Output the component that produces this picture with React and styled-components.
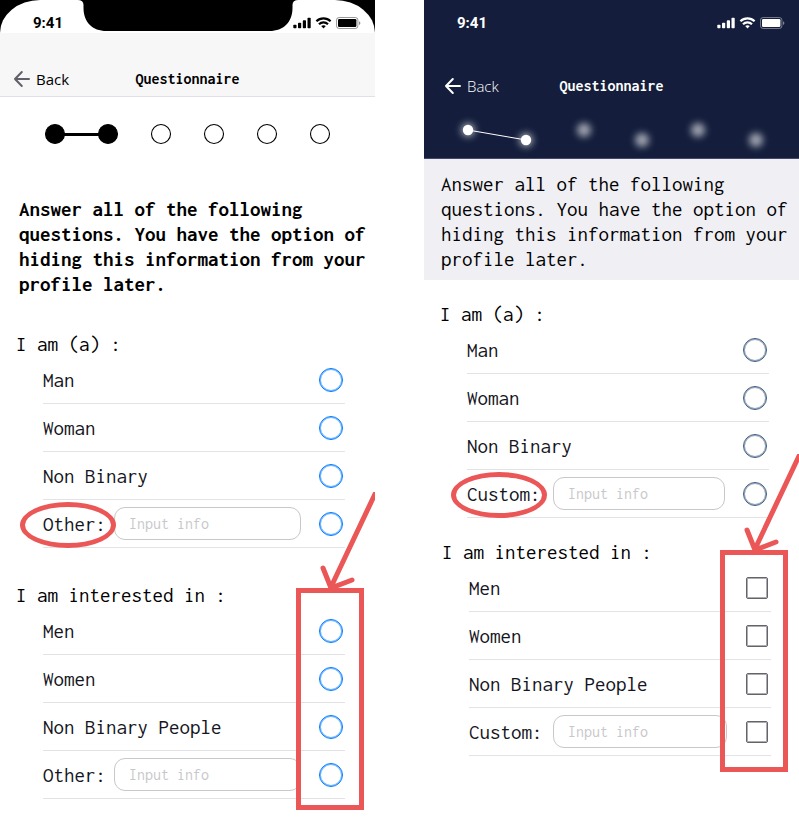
import React from "react";
import styled, { createGlobalStyle } from "styled-components";

const mono = 'Inconsolata, "Liberation Mono", monospace';

const GlobalStyle = createGlobalStyle`
  * { box-sizing: border-box; }
  body { margin: 0; background: #fff; color: #000; font-family: ${mono}; }
`;

const Board = styled.main`
  display: grid;
  grid-template-columns: 1fr 1fr;
  column-gap: 49px;
  align-items: start;
  min-height: 100vh;
  overflow: hidden;
`;

const Phone = styled.section`
  min-width: 0;
`;

const Header = styled.header`
  background: ${(p) => (p.$dark ? "#141e3c" : "#f7f7f7")};
  color: ${(p) => (p.$dark ? "#fff" : "#000")};
  border-bottom: 1px solid ${(p) => (p.$dark ? "#43496b" : "#e0e0e6")};
`;

const Bezel = styled.div`
  position: relative;
  background: ${(p) => (p.$dark ? "transparent" : "#000")};
`;

const StatusBar = styled.div`
  display: flex;
  align-items: center;
  justify-content: space-between;
  height: 33px;
  padding: 12px 14px 0 33px;
  background: ${(p) => (p.$dark ? "transparent" : "#fff")};
  border-radius: ${(p) => (p.$dark ? "0" : "40px 40px 0 0 / 33px 33px 0 0")};
`;

const Notch = styled.svg`
  position: absolute;
  top: 0;
  left: 50%;
  transform: translateX(-50%);
`;

const Time = styled.time`
  font: 700 15px/18px Roboto, sans-serif;
`;

const NavBar = styled.nav`
  display: grid;
  grid-template-columns: 1fr auto 1fr;
  align-items: center;
  padding: ${(p) => (p.$dark ? "39px 20px 11px" : "32px 13px 3px")};
`;

const BackButton = styled.button`
  display: flex;
  align-items: center;
  gap: 5px;
  justify-self: start;
  height: 28px;
  padding: 0;
  border: 0;
  background: none;
  color: inherit;
  font: ${(p) => (p.$dark ? 300 : 400)} 15px/20px "Open Sans", sans-serif;

  svg { color: ${(p) => (p.$dark ? "#fff" : "#626068")}; }
`;

const Title = styled.h1`
  margin: 0;
  font: 700 16px/20px ${mono};
`;

const StepTrack = styled.div`
  display: flex;
  justify-content: center;
  padding: ${(p) => (p.$dark ? "0" : "26px 0 50px")};
`;

const Prompt = styled.p`
  margin: 0;
  padding: ${(p) => (p.$dark ? "13px 8px 8px 17px" : "0 8px 0 19px")};
  background: ${(p) => (p.$dark ? "#efeff4" : "transparent")};
  font-size: 21px;
  line-height: 25px;
  font-weight: ${(p) => (p.$dark ? 400 : 700)};
`;

const Group = styled.fieldset`
  position: relative;
  min-width: 0;
  margin: ${(p) => p.$gap}px 0 0;
  padding: 0 ${(p) => p.$end}px 0 ${(p) => p.$start}px;
  border: 0;
`;

const Heading = styled.legend`
  float: left;
  width: calc(100% + 27px);
  margin-left: -27px;
  padding: 0;
  font-size: 21px;
  line-height: 24px;
`;

const Options = styled.div`
  clear: both;
`;

const Row = styled.div`
  position: relative;
  display: flex;
  align-items: center;
  height: 48px;
  padding: 0 2px 0 0;
  border-bottom: 1px solid #e3e3e5;
`;

const Label = styled.label`
  flex: ${(p) => (p.$width ? `0 0 ${p.$width}px` : "1")};
  padding-top: 1px;
  color: #151522;
  font-size: 21px;
  line-height: 24px;
`;

const TextField = styled.input`
  flex: 1;
  min-width: 0;
  height: 33px;
  margin-right: ${(p) => (p.$square ? 19 : 18)}px;
  padding: 0 14px;
  border: 1px solid #c8c7cc;
  border-radius: 11px;
  background: #fff;
  color: #151522;
  font: 16px/20px ${mono};

  &::placeholder { color: #c8c8cb; opacity: 1; }
`;

const Choice = styled.input`
  appearance: none;
  flex: none;
  width: ${(p) => (p.type === "radio" ? 24 : 22)}px;
  height: ${(p) => (p.type === "radio" ? 24 : 22)}px;
  margin: 0 ${(p) => (p.type === "radio" ? 0 : 1)}px 0 0;
  border: 1px solid ${(p) => p.$tone};
  box-shadow: inset 0 0 0 1px ${(p) => p.$tone}88;
  border-radius: ${(p) => (p.type === "radio" ? "50%" : "2px")};
  background: #fff;

  &:checked { background: ${(p) => p.$tone}; }
`;

const Circled = styled.span`
  position: absolute;
  top: 2px;
  left: ${(p) => p.$left}px;
  width: 96px;
  height: 46px;
  border: 5px solid #eb5757;
  border-radius: 50%;
  pointer-events: none;
`;

const Highlight = styled.span`
  position: absolute;
  top: ${(p) => p.$top}px;
  right: 11px;
  width: 68px;
  height: 222px;
  border: 5px solid #eb5757;
  pointer-events: none;
`;

const Arrow = styled.svg`
  position: absolute;
  top: ${(p) => p.$top}px;
  right: 0;
  pointer-events: none;
`;

function StatusIcons() {
  return (
    <svg width="68" height="14" viewBox="0 0 68 14" fill="currentColor" aria-hidden="true">
      <rect x="0.3" y="8.7" width="3.2" height="3.6" rx="0.8" />
      <rect x="5" y="6.8" width="3.2" height="5.5" rx="0.8" />
      <rect x="9.8" y="4.3" width="3.2" height="8" rx="0.8" />
      <rect x="14.5" y="1.8" width="3.2" height="10.5" rx="0.8" />
      <g fill="none" stroke="currentColor" strokeWidth="2.2">
        <path d="M23.4 5.2a10.1 10.1 0 0 1 14.2 0" />
        <path d="M26 8.2a6.5 6.5 0 0 1 9 0" />
      </g>
      <path d="M28.2 10.1a3.6 3.6 0 0 1 4.6 0l-2.3 2.5z" />
      <rect x="43.5" y="1.5" width="21.4" height="11" rx="2.6" fill="none" stroke="currentColor" opacity="0.4" />
      <rect x="45" y="3" width="18.4" height="8" rx="1.2" />
      <path d="M66 5.2v3.8a2 2 0 0 0 0-3.8z" opacity="0.45" />
    </svg>
  );
}

function BackArrow() {
  return (
    <svg width="18" height="18" viewBox="0 0 18 18" fill="none" stroke="currentColor" strokeWidth="2" strokeLinecap="round" strokeLinejoin="round" aria-hidden="true">
      <path d="M16 9H2M8.8 2 2 9l6.8 7" />
    </svg>
  );
}

function CircleSteps() {
  return (
    <svg width="287" height="24" viewBox="0 0 287 24" role="img" aria-label="Step 2 of 6">
      <path d="M10 11.5h53" stroke="#000" strokeWidth="3" />
      {[11, 64, 117, 170, 223, 276].map((x, i) => (
        <circle key={x} cx={x} cy="11" r="9.5" fill={i < 2 ? "#000" : "#fff"} stroke="#000" strokeWidth="1.1" />
      ))}
    </svg>
  );
}

function StarSteps() {
  const stars = [[20, 19], [78, 29], [136, 19], [194, 29], [250, 19], [308, 29]];
  return (
    <svg width="328" height="47" viewBox="0 0 328 47" role="img" aria-label="Step 2 of 6">
      <defs>
        <filter id="glow" x="-150%" y="-150%" width="400%" height="400%">
          <feGaussianBlur stdDeviation="3.8" />
        </filter>
      </defs>
      {stars.map(([x, y]) => (
        <circle key={x} cx={x} cy={y} r="7" fill="#fff" opacity="0.6" filter="url(#glow)" />
      ))}
      <path d="M20 19 78 29" stroke="#fff" strokeWidth="1" />
      {stars.slice(0, 2).map(([x, y]) => (
        <circle key={x} cx={x} cy={y} r="5.2" fill="#fff" />
      ))}
    </svg>
  );
}

function Question({ id, title, options, custom, labelWidth, type = "radio", tone, gap, start = 43, end = 30, circled, mark }) {
  return (
    <Group $gap={gap} $start={start} $end={end}>
      <Heading>{title}</Heading>
      <Options>
        {options.map((option) => (
          <Row key={option}>
            <Label htmlFor={`${id}-${option}`}>{option}</Label>
            <Choice type={type} name={id} id={`${id}-${option}`} $tone={tone} />
          </Row>
        ))}
        <Row>
          <Label htmlFor={`${id}-custom`} $width={labelWidth}>{custom}</Label>
          <TextField type="text" placeholder="Input info" aria-label={`${title} ${custom}`} $square={type !== "radio"} />
          <Choice type={type} name={id} id={`${id}-custom`} $tone={tone} />
          {circled !== undefined && <Circled $left={circled} />}
        </Row>
      </Options>
      {mark !== undefined && (
        <>
          <Highlight $top={mark} />
          <Arrow $top={mark - 96} width="60" height="100" viewBox="0 0 60 100" fill="none" stroke="#eb5757" strokeWidth="5" strokeLinecap="round" aria-hidden="true">
            <path d="M60 2 16 95M8 76 16 96 37 88" />
          </Arrow>
        </>
      )}
    </Group>
  );
}

function ScreenHeader({ dark }) {
  return (
    <Header $dark={dark}>
      <Bezel $dark={dark}>
        <StatusBar $dark={dark}>
          <Time>9:41</Time>
          <StatusIcons />
        </StatusBar>
        {!dark && (
          <Notch width="221" height="31" viewBox="0 0 221 31" aria-hidden="true">
            <path d="M0 0h221q-6 0-6 5v3c0 14-9 23-23 23H29C15 31 6 22 6 8V5q0-5-6-5z" />
          </Notch>
        )}
      </Bezel>
      <NavBar $dark={dark}>
        <BackButton type="button" $dark={dark}>
          <BackArrow />
          Back
        </BackButton>
        <Title>Questionnaire</Title>
      </NavBar>
      {dark && (
        <StepTrack $dark>
          <StarSteps />
        </StepTrack>
      )}
    </Header>
  );
}

const prompt =
  "Answer all of the following questions. You have the option of hiding this information from your profile later.";
const identities = ["Man", "Woman", "Non Binary"];
const interests = ["Men", "Women", "Non Binary People"];

export default function App() {
  return (
    <>
      <GlobalStyle />
      <Board>
        <Phone>
          <ScreenHeader />
          <StepTrack>
            <CircleSteps />
          </StepTrack>
          <Prompt>{prompt}</Prompt>
          <Question id="before-am" title="I am (a) :" options={identities} custom="Other:" labelWidth={71} tone="#007aff" gap={35} circled={-23} />
          <Question id="before-in" title="I am interested in :" options={interests} custom="Other:" labelWidth={71} tone="#007aff" gap={35} mark={5} />
        </Phone>
        <Phone>
          <ScreenHeader dark />
          <Prompt $dark>{prompt}</Prompt>
          <Question id="after-am" title="I am (a) :" options={identities} custom="Custom:" labelWidth={86} tone="#3e5c7f" gap={22} circled={-16} />
          <Question id="after-in" title="I am interested in :" options={interests} custom="Custom:" labelWidth={84} type="checkbox" tone="#66636b" gap={22} start={45} end={28} mark={10} />
        </Phone>
      </Board>
    </>
  );
}
